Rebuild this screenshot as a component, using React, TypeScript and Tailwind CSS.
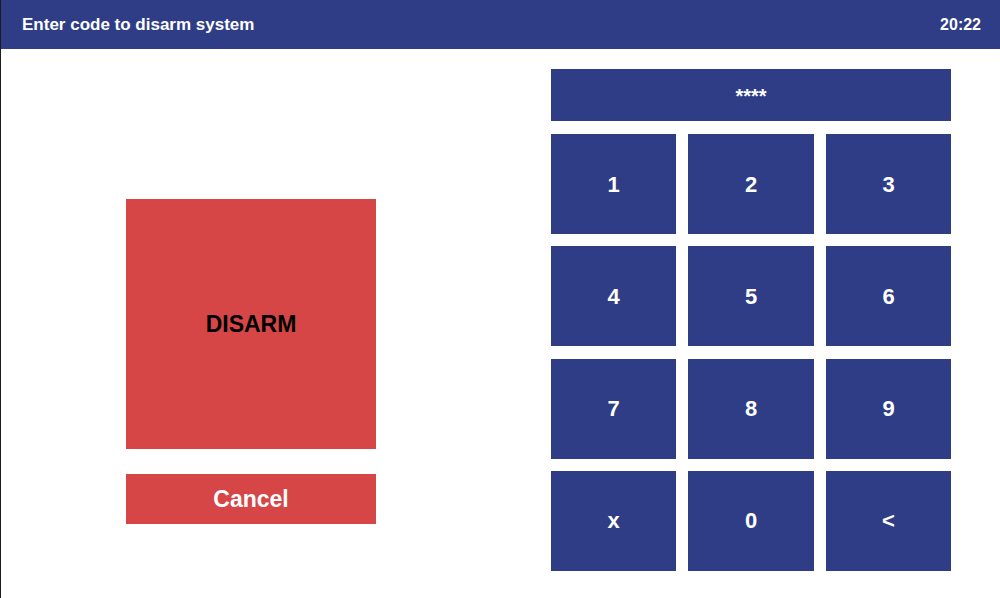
const KEYS = ['1', '2', '3', '4', '5', '6', '7', '8', '9', 'x', '0', '<'];

export default function App() {
  return (
    <div
      className="w-[1000px] h-[598px] flex flex-col bg-white border-l border-[#1c1c1c] overflow-hidden"
      style={{ fontFamily: '"Liberation Sans", Arial, sans-serif' }}
    >
      {/* Header */}
      <div className="h-[49px] shrink-0 flex items-center justify-between pl-[21px] pr-[19px] bg-[#2e3d85] text-white font-bold">
        <span className="text-[17px]">Enter code to disarm system</span>
        <span className="text-[16px]">20:22</span>
      </div>

      <div className="flex flex-1">
        {/* Left: actions */}
        <div className="w-[500px] shrink-0 flex flex-col items-center pt-[150px]">
          <button className="w-[250px] h-[250px] bg-[#d64646] text-black font-bold text-[23px] flex items-center justify-center">
            DISARM
          </button>
          <button className="w-[250px] h-[50px] mt-[25px] bg-[#d64646] text-white font-bold text-[23px] flex items-center justify-center">
            Cancel
          </button>
        </div>

        {/* Right: keypad */}
        <div className="flex-1 flex flex-col pt-[20px] pl-[50px]">
          <div className="w-[400px] h-[52px] bg-[#2e3d85] text-white font-bold text-[20px] flex items-center justify-center pt-[1px]">
            ****
          </div>
          <div className="w-[400px] mt-[13px] grid grid-cols-[125px_126px_125px] grid-rows-[repeat(4,100px)] gap-x-[12px] gap-y-[12.33px]">
            {KEYS.map((k) => (
              <button
                key={k}
                className="bg-[#2e3d85] text-white font-bold text-[22px] flex items-center justify-center"
              >
                {k}
              </button>
            ))}
          </div>
        </div>
      </div>
    </div>
  );
}
